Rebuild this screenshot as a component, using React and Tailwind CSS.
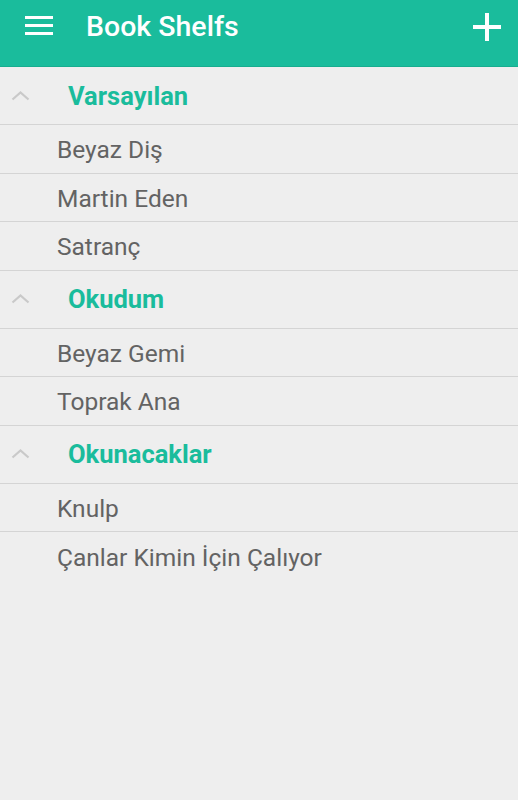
const shelves = [
  { name: "Varsayılan", books: ["Beyaz Diş", "Martin Eden", "Satranç"] },
  { name: "Okudum", books: ["Beyaz Gemi", "Toprak Ana"] },
  { name: "Okunacaklar", books: ["Knulp", "Çanlar Kimin İçin Çalıyor"] },
];

const Chevron = () => (
  <svg width="19" height="10" viewBox="0 0 19 10" className="shrink-0">
    <path d="M1.5 8.5 L9.5 1.5 L17.5 8.5" fill="none" stroke="#c9c9c9" strokeWidth="2.2" />
  </svg>
);

export default function App() {
  return (
    <div className="min-h-screen w-full bg-[#eeeeee] font-['Roboto',sans-serif]">
      <header className="h-[67px] bg-[#1abc9c] border-b border-[#17ad8f] flex items-center pb-[12px]">
        <button className="ml-[25px] mb-[3px] w-[28px] h-[19px] flex flex-col justify-between">
          <span className="block h-[3px] w-full bg-white" />
          <span className="block h-[3px] w-full bg-white" />
          <span className="block h-[3px] w-full bg-white" />
        </button>
        <h1 className="ml-[33px] text-[28.5px] font-medium text-white leading-none">Book Shelfs</h1>
        <button className="ml-auto mr-[17px]">
          <svg width="28" height="28" viewBox="0 0 28 28">
            <path d="M14 0 V28 M0 14 H28" stroke="white" strokeWidth="4" />
          </svg>
        </button>
      </header>

      <div>
        {shelves.map((shelf) => (
          <div key={shelf.name}>
            <div className="h-[58px] flex items-center border-b border-[#d4d4d4] pl-[11px]">
              <Chevron />
              <span className="ml-[38px] pt-[2px] text-[25.5px] font-bold text-[#1abc9c] leading-none">{shelf.name}</span>
            </div>
            {shelf.books.map((book, i) => (
              <div
                key={book}
                className={`h-[48.5px] flex items-center pl-[57px] pt-[3px] text-[24.5px] text-[#636363] leading-none ${
                  shelf.name === "Okunacaklar" && i === shelf.books.length - 1 ? "" : "border-b border-[#d4d4d4]"
                }`}
              >
                {book}
              </div>
            ))}
          </div>
        ))}
      </div>
    </div>
  );
}
